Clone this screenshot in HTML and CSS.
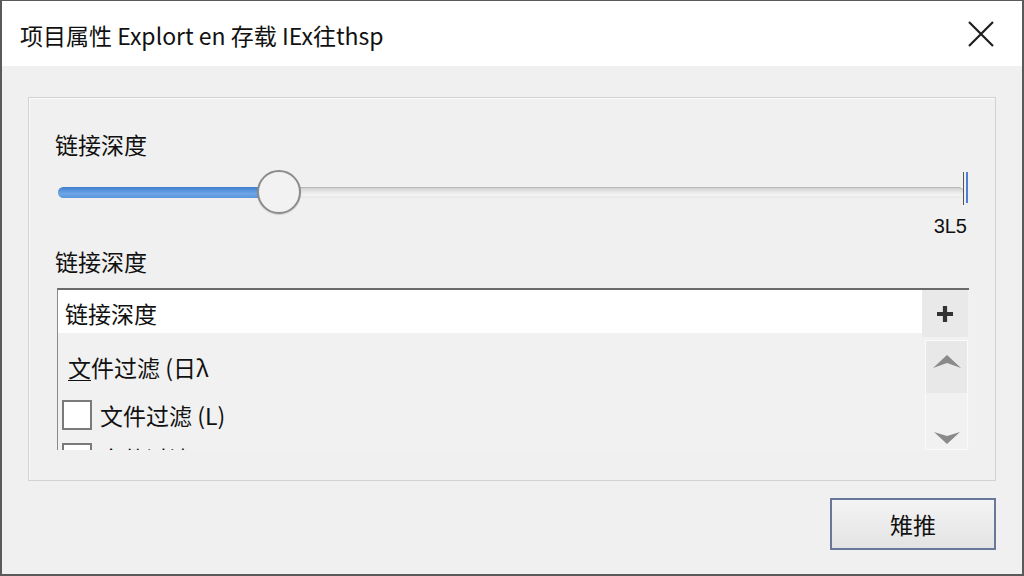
FILE: index.html
```html
<!DOCTYPE html>
<html lang="zh">
<head>
<meta charset="utf-8">
<title>项目属性</title>
<link rel="stylesheet" href="styles.css">
</head>
<body>
<div class="window">
  <div class="titlebar">
    <div class="title">项目属性 Explort en 存载 IEx往thsp</div>
    <button class="close" aria-label="关闭">
      <svg width="28" height="28" viewBox="0 0 28 28"><path d="M2 2 L26 26 M26 2 L2 26" stroke="#1e1e1e" stroke-width="2.2" fill="none"/></svg>
    </button>
  </div>
  <div class="content">
    <div class="group">
      <div class="label">链接深度</div>
      <div class="slider">
        <div class="track"><div class="fill" style="width:212px"></div></div>
        <div class="thumb"></div>
        <div class="tick tick-gray"></div>
        <div class="tick tick-blue"></div>
      </div>
      <div class="value">3L5</div>
      <div class="label label2">链接深度</div>
      <div class="list">
        <div class="list-main">
          <div class="row row-selected">链接深度</div>
          <div class="row row-plain"><span class="ul">文</span>件过滤 (日λ</div>
          <div class="row row-check"><span class="box"></span>文件过滤 (L)</div>
          <div class="row row-check"><span class="box"></span>文件过滤</div>
        </div>
        <div class="list-side">
          <div class="plus">
            <svg width="18" height="18" viewBox="0 0 18 18"><path d="M9 1 V17 M1 9 H17" stroke="#333" stroke-width="4.2"/></svg>
          </div>
          <div class="scrollbar">
            <div class="sb-up">
              <svg width="32" height="16" viewBox="0 0 32 16"><path d="M2 15 L16 2 L30 15 L16 10 Z" fill="#8a8a8a"/></svg>
            </div>
            <div class="sb-down">
              <svg width="30" height="14" viewBox="0 0 30 14"><path d="M2 1 L15 5 L28 1 L15 13 Z" fill="#8a8a8a"/></svg>
            </div>
          </div>
        </div>
      </div>
    </div>
    <div class="footer">
      <button class="btn">雉推</button>
    </div>
  </div>
</div>
</body>
</html>
```

FILE: styles.css
```css
* { box-sizing: border-box; }
html, body { margin: 0; padding: 0; }
body {
  width: 1024px;
  height: 576px;
  overflow: hidden;
  font-family: "Noto Sans CJK SC", "Noto Sans", "Liberation Sans", sans-serif;
  color: #111111;
  background: #f0f0f0;
}
.window {
  width: 1024px;
  height: 576px;
  border: 2px solid #5a5a5a;
  border-top-width: 1px;
  display: flex;
  flex-direction: column;
  background: #f0f0f0;
}
.titlebar {
  height: 65px;
  background: #ffffff;
  display: flex;
  align-items: center;
  justify-content: space-between;
  padding: 0 27px 0 18px;
}
.title {
  font-size: 23px;
  line-height: 30px;
  color: #111111;
  padding-top: 2px;
}
.close {
  border: 0;
  background: transparent;
  padding: 0;
  width: 28px;
  height: 28px;
  display: flex;
}
.content {
  flex: 1;
  display: flex;
  flex-direction: column;
  padding: 31px 26px 0 26px;
}
.group {
  height: 384px;
  border: 1px solid #d2d2d2;
  box-shadow: inset 1px 1px 0 #fafafa;
  padding: 31px 27px 0 26px;
  display: flex;
  flex-direction: column;
}
.label {
  font-size: 23px;
  line-height: 30px;
  height: 30px;
}
.slider {
  position: relative;
  height: 44px;
  margin-top: 11px;
}
.track {
  position: absolute;
  left: 3px;
  right: 4px;
  top: 17px;
  height: 11px;
  border-radius: 6px;
  background: linear-gradient(#cfcfcf, #f4f4f4 70%, #e6e6e6);
  box-shadow: inset 0 1px 1px rgba(0,0,0,0.12);
}
.fill {
  height: 100%;
  border-radius: 6px 0 0 6px;
  background: linear-gradient(#3f7fcf, #6ea6e6 60%, #5a95dc);
}
.thumb {
  position: absolute;
  left: 202px;
  top: 0;
  width: 44px;
  height: 44px;
  border-radius: 50%;
  border: 2.5px solid #8c8c8c;
  background: #f2f2f2;
  box-shadow: 0 1px 1px rgba(0,0,0,0.15);
}
.tick {
  position: absolute;
  top: 2px;
}
.tick-gray {
  left: 908px;
  width: 1px;
  height: 33px;
  background: #555;
}
.tick-blue {
  left: 911px;
  width: 2px;
  height: 31px;
  background: #4b80d4;
}
.value {
  align-self: flex-end;
  margin-right: 1px;
  font-size: 20px;
  line-height: 24px;
  height: 24px;
  font-family: "Liberation Sans", "Noto Sans CJK SC", sans-serif;
  color: #111;
}
.label2 {
  margin-top: 8px;
}
.list {
  margin-top: 12px;
  height: 162px;
  display: flex;
  border-top: 2px solid #6a6a6a;
  border-left: 1px solid #8a8a8a;
  margin-left: 2px;
  width: 912px;
  overflow: hidden;
  background: #f1f1f1;
}
.list-main {
  flex: 1;
  display: flex;
  flex-direction: column;
}
.row {
  font-size: 23px;
  line-height: 30px;
  display: flex;
  align-items: center;
  flex-shrink: 0;
}
.row-selected {
  height: 43px;
  background: #ffffff;
  padding-left: 7px;
  padding-top: 2px;
}
.row-plain {
  height: 59px;
  padding-left: 10px;
  padding-top: 8px;
}
.ul {
  text-decoration: underline;
  text-underline-offset: 3px;
  text-decoration-thickness: 1px;
}
.row-check {
  height: 43px;
  padding-left: 4px;
  padding-top: 2px;
}
.box {
  width: 30px;
  height: 30px;
  border: 2px solid #7a7a7a;
  background: #ffffff;
  margin-right: 8px;
  flex-shrink: 0;
}
.list-side {
  width: 47px;
  display: flex;
  flex-direction: column;
  padding-right: 1px;
}
.plus {
  height: 47px;
  background: #e9e9e9;
  display: flex;
  align-items: center;
  justify-content: center;
}
.scrollbar {
  margin: 3px 0 0 3px;
  flex: 1;
  border: 1px solid #fafafa;
  background: #f1f1f1;
  display: flex;
  flex-direction: column;
}
.sb-up {
  height: 52px;
  background: #e8e8e8;
  display: flex;
  justify-content: center;
  padding-top: 12px;
}
.sb-down {
  flex: 1;
  display: flex;
  justify-content: center;
  align-items: flex-end;
  padding-bottom: 4px;
}
.footer {
  display: flex;
  justify-content: flex-end;
  padding-top: 17px;
}
.btn {
  width: 166px;
  height: 52px;
  border: 2px solid #68779a;
  background: linear-gradient(#f4f4f4, #e3e3e3);
  font-family: "Noto Sans CJK SC", sans-serif;
  font-size: 23px;
  color: #111111;
  padding: 0;
}
```
